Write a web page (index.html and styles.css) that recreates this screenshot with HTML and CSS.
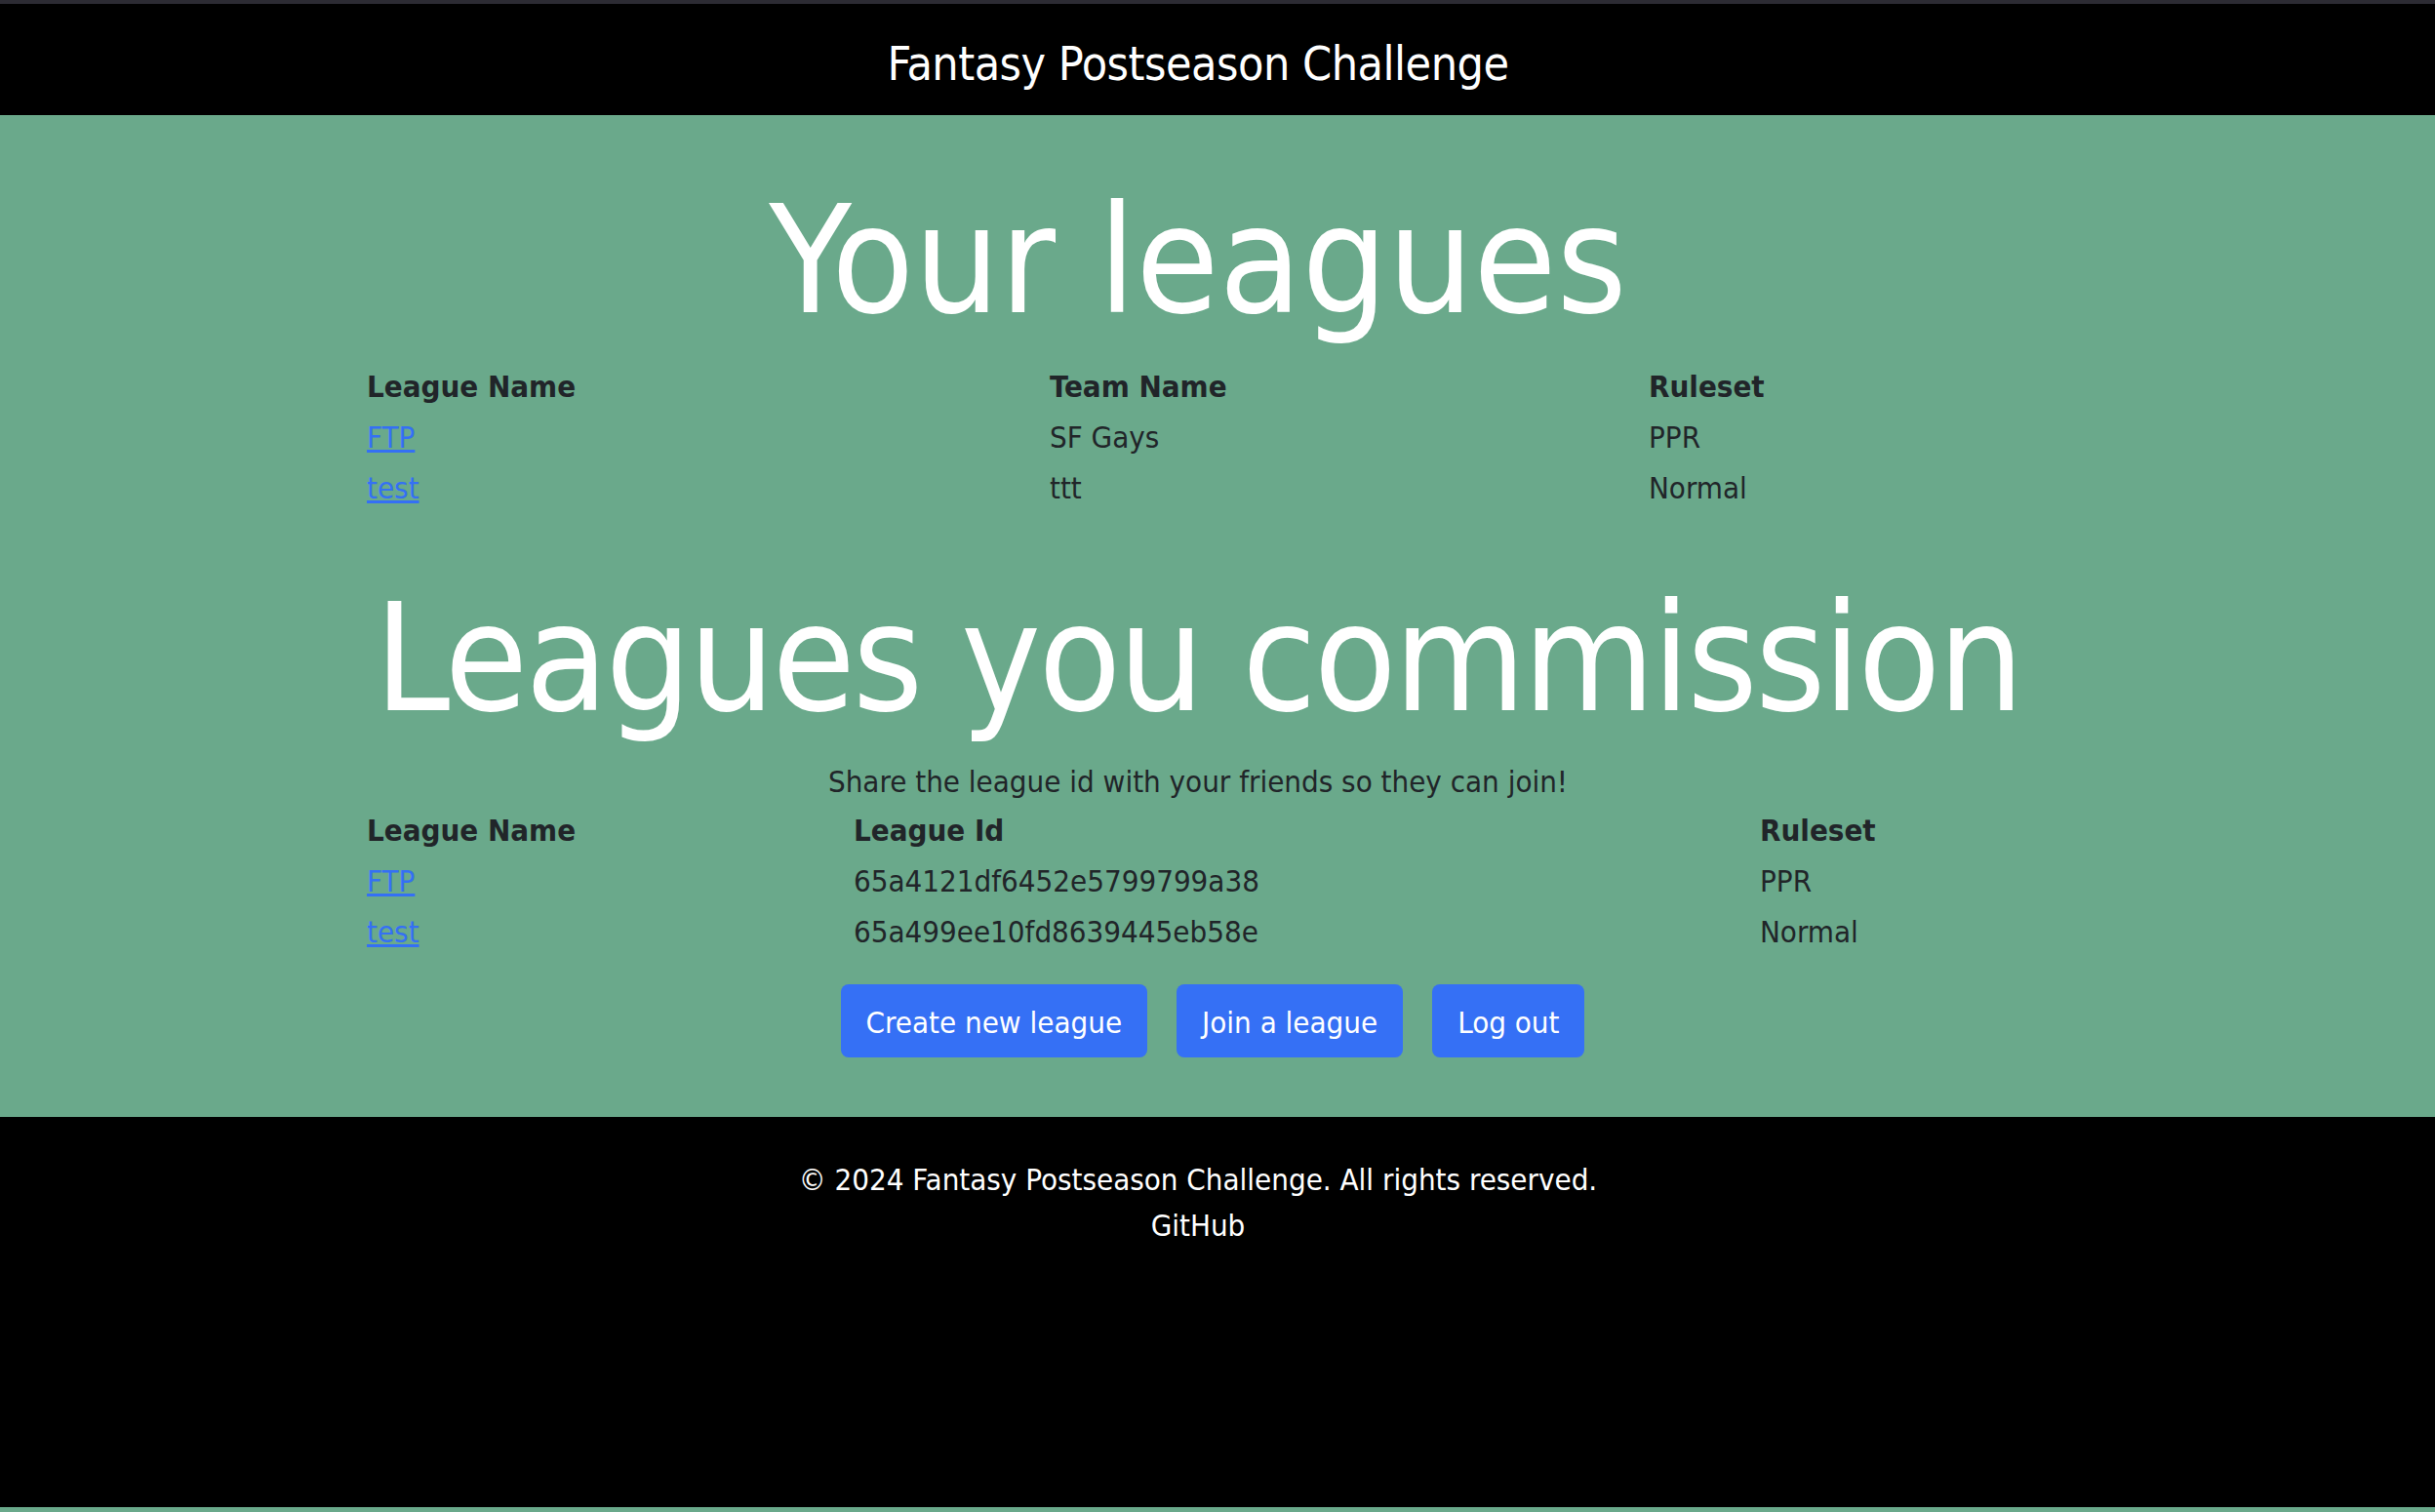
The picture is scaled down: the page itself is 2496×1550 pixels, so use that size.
FILE: index.html
```html
<!DOCTYPE html>
<html lang="en">
<head>
<meta charset="utf-8">
<title>Fantasy Postseason Challenge</title>
<link rel="stylesheet" href="styles.css">
</head>
<body>
<header class="site-header">
  <div class="inner">
    <div class="brand">Fantasy Postseason Challenge</div>
  </div>
</header>
<main class="site-main">
  <div class="inner">
    <h1 class="display">Your leagues</h1>
    <table class="leagues">
      <thead>
        <tr><th class="c1a">League Name</th><th class="c1b">Team Name</th><th class="c1c">Ruleset</th></tr>
      </thead>
      <tbody>
        <tr><td><a href="#">FTP</a></td><td>SF Gays</td><td>PPR</td></tr>
        <tr><td><a href="#">test</a></td><td>ttt</td><td>Normal</td></tr>
      </tbody>
    </table>
    <h1 class="display second">Leagues you commission</h1>
    <p class="share">Share the league id with your friends so they can join!</p>
    <table class="leagues">
      <thead>
        <tr><th class="c2a">League Name</th><th class="c2b">League Id</th><th class="c2c">Ruleset</th></tr>
      </thead>
      <tbody>
        <tr><td><a href="#">FTP</a></td><td>65a4121df6452e5799799a38</td><td>PPR</td></tr>
        <tr><td><a href="#">test</a></td><td>65a499ee10fd8639445eb58e</td><td>Normal</td></tr>
      </tbody>
    </table>
    <div class="actions">
      <a class="btn" href="#">Create new league</a>
      <a class="btn" href="#">Join a league</a>
      <a class="btn" href="#">Log out</a>
    </div>
  </div>
</main>
<footer class="site-footer">
  <div class="inner">
    <p class="copy">© 2024 Fantasy Postseason Challenge. All rights reserved.</p>
    <p class="copy">GitHub</p>
  </div>
</footer>
</body>
</html>
```
FILE: styles.css
```css
html, body {
  margin: 0;
  padding: 0;
}
body {
  background: #6aa98b;
  font-family: "DejaVu Sans Condensed", "DejaVu Sans", sans-serif;
  color: #212529;
}
.inner {
  margin-right: 40px;
  text-align: center;
}
.site-header {
  background: #000;
  border-top: 4px solid #2c2b33;
  padding: 33px 0 0;
  height: 118px;
  box-sizing: border-box;
}
.brand {
  color: #fff;
  font-size: 48px;
  letter-spacing: -0.5px;
  line-height: 1.2;
}
.site-main {
  background: #6aa98b;
  padding: 57px 0 61px;
}
.display {
  margin: 0;
  font-weight: 400;
  color: #fff;
  font-size: 154px;
  line-height: 1.2;
}
.display.second {
  margin-top: 57px;
  letter-spacing: -2.6px;
}
.leagues {
  width: 1704px;
  margin: 10px auto 0;
  border-collapse: collapse;
  text-align: left;
  font-size: 31px;
}
.leagues th, .leagues td {
  padding: 0;
  height: 52px;
  line-height: 52px;
  vertical-align: top;
}
.leagues th {
  font-weight: 700;
}
.c1a { width: 700px; }
.c1b { width: 614px; }
.c1c { width: 390px; }
.c2a { width: 499px; }
.c2b { width: 929px; }
.c2c { width: 276px; }
.leagues a {
  color: #3470f5;
  text-decoration: underline;
}
.share {
  margin: 10px 0 0;
  font-size: 31px;
  line-height: 46px;
}
.share + .leagues {
  margin-top: 1px;
}
.actions {
  margin-top: 28px;
  display: flex;
  justify-content: center;
}
.btn {
  display: inline-block;
  margin-left: 30px;
  background: #3570f5;
  color: #fff;
  text-decoration: none;
  font-size: 31px;
  line-height: 49px;
  padding: 15px 26px 11px;
  border-radius: 8px;
}
.site-footer {
  background: #000;
  color: #fff;
  height: 400px;
  box-sizing: border-box;
  padding-top: 41px;
}
.copy {
  margin: 0;
  font-size: 31px;
  line-height: 47px;
}
```
